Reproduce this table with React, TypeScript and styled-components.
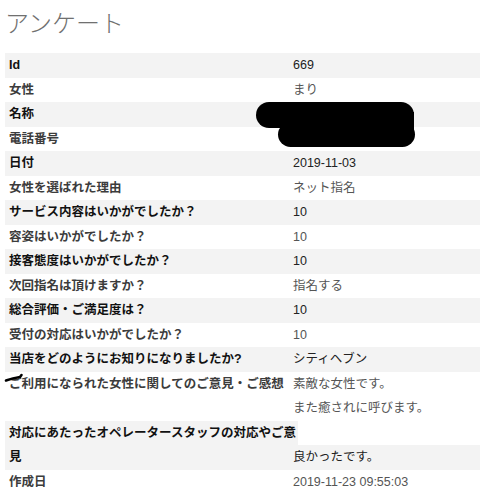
import React from "react";
import styled, { createGlobalStyle } from "styled-components";

const GlobalStyle = createGlobalStyle`
  html, body {
    margin: 0;
    padding: 0;
    background: #ffffff;
  }
  body {
    font-family: "Liberation Sans", "Noto Sans CJK JP", sans-serif;
  }
`;

const Page = styled.div`
  position: relative;
  width: 480px;
  height: 489px;
  overflow: hidden;
  background: #ffffff;
`;

const Title = styled.h1`
  margin: 0;
  padding: 6px 0 15px 5px;
  font-family: "Noto Sans CJK JP", sans-serif;
  font-size: 24px;
  line-height: 32px;
  font-weight: 300;
  color: #707070;
`;

const List = styled.div`
  margin-left: 5px;
  display: flex;
  flex-direction: column;
`;

const Row = styled.div`
  display: grid;
  grid-template-columns: 288px 1fr;
  font-size: 12.5px;
  line-height: 24.5px;
`;

const Label = styled.div<{ $striped: boolean }>`
  margin-right: -5px;
  padding-left: 4px;
  font-weight: bold;
  color: ${(p) => (p.$striped ? "#111111" : "#3c3c3c")};
  background: ${(p) => (p.$striped ? "#f3f3f3" : "transparent")};
`;

const Value = styled.div<{ $striped: boolean; $bottom: boolean }>`
  position: relative;
  white-space: pre-line;
  color: ${(p) => (p.$striped ? "#222222" : "#555555")};
  background: ${(p) => (p.$striped ? "#f3f3f3" : "transparent")};
  align-self: ${(p) => (p.$bottom ? "end" : "stretch")};
`;

const Overlay = styled.svg`
  position: absolute;
  left: 0;
  top: 0;
  pointer-events: none;
`;

type Entry = { label: string; value: string; bottom?: boolean };

const entries: Entry[] = [
  { label: "Id", value: "669" },
  { label: "女性", value: "まり" },
  { label: "名称", value: "" },
  { label: "電話番号", value: "" },
  { label: "日付", value: "2019-11-03" },
  { label: "女性を選ばれた理由", value: "ネット指名" },
  { label: "サービス内容はいかがでしたか？", value: "10" },
  { label: "容姿はいかがでしたか？", value: "10" },
  { label: "接客態度はいかがでしたか？", value: "10" },
  { label: "次回指名は頂けますか？", value: "指名する" },
  { label: "総合評価・ご満足度は？", value: "10" },
  { label: "受付の対応はいかがでしたか？", value: "10" },
  { label: "当店をどのようにお知りになりましたか?", value: "シティヘブン" },
  {
    label: "ご利用になられた女性に関してのご意見・ご感想",
    value: "素敵な女性です。\nまた癒されに呼びます。",
  },
  {
    label: "対応にあたったオペレータースタッフの対応やご意見",
    value: "良かったです。",
    bottom: true,
  },
  { label: "作成日", value: "2019-11-23 09:55:03" },
];

export default function App() {
  return (
    <Page>
      <GlobalStyle />
      <Title>アンケート</Title>
      <List>
        {entries.map((e, i) => {
          const striped = i % 2 === 0;
          return (
            <Row key={e.label}>
              <Label $striped={striped}>{e.label}</Label>
              <Value $striped={striped} $bottom={!!e.bottom}>
                {e.value || "\u00a0"}
              </Value>
            </Row>
          );
        })}
      </List>
      <Overlay width="480" height="489" viewBox="0 0 480 489">
        <rect x="256" y="102" width="158" height="26" rx="13" fill="#000" />
        <rect x="278" y="122" width="137" height="25" rx="12.5" fill="#000" />
        <rect x="330" y="112" width="84" height="20" fill="#000" />
        <path
          d="M6 380.5 Q 13 378 20 377 L 21.5 375"
          stroke="#000"
          strokeWidth="2.6"
          fill="none"
          strokeLinecap="round"
        />
      </Overlay>
    </Page>
  );
}
